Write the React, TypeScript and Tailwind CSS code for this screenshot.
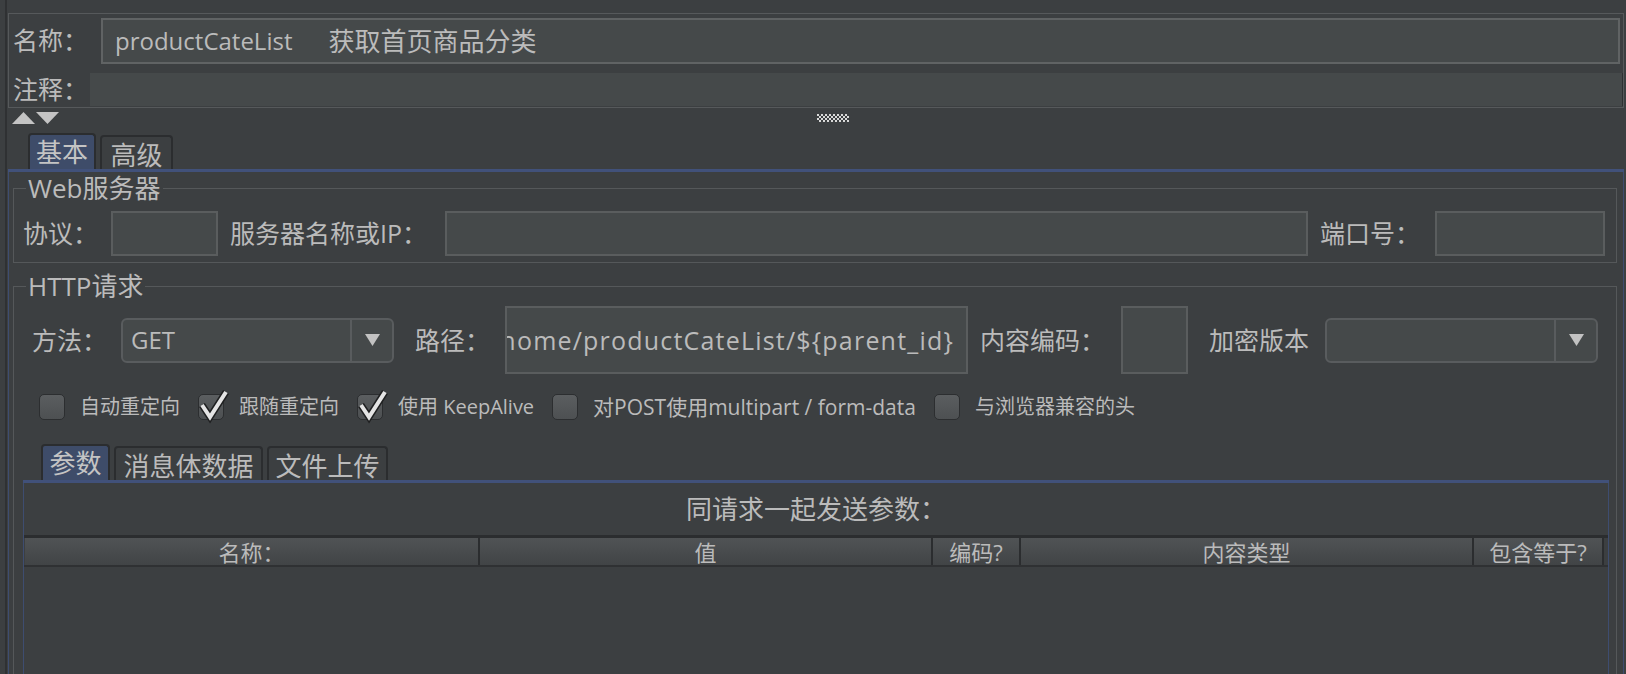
import React from "react";

const FONT = "font-['Open_Sans','Noto_Sans_CJK_SC',sans-serif]";

function Check() {
  return (
    <svg
      className="absolute left-0 top-0 overflow-visible"
      width="26"
      height="26"
      viewBox="0 0 26 26"
    >
      <path d="M3 10 L11 22 L27 -3" fill="none" stroke="#1f2021" strokeWidth="7" strokeLinejoin="miter" />
      <path d="M3 10 L11 22 L27 -3" fill="none" stroke="#e4e4e4" strokeWidth="4" strokeLinejoin="miter" />
    </svg>
  );
}

function CheckItem({ label, checked, size = "text-[20px]" }: { label: string; checked?: boolean; size?: string }) {
  return (
    <div className="flex items-center gap-[15px]">
      <span className="relative w-[26px] h-[26px] shrink-0 rounded-[5px] border border-[#2c2e30] bg-gradient-to-b from-[#5b5e60] to-[#4d5052]">
        {checked && <Check />}
      </span>
      <span className={`${size} leading-none whitespace-nowrap`}>{label}</span>
    </div>
  );
}

function Tab({ label, selected, w }: { label: string; selected?: boolean; w: string }) {
  return (
    <div
      className={
        selected
          ? `${w} h-[36px] flex items-center justify-center rounded-t-[4px] border-2 border-b-0 border-[#2b2d2f] bg-[#3e4c69] text-[26px] leading-none text-[#c4c4c4]`
          : `${w} h-[34px] flex items-center justify-center rounded-t-[4px] border-2 border-b-0 border-[#2b2d2f] bg-[#3c3f41] text-[26px] leading-none pt-[3px]`
      }
    >
      {label}
    </div>
  );
}

function Combo({ value }: { value?: string }) {
  return (
    <div className="w-[273px] h-[45px] flex rounded-[6px] border-2 border-[#595c5e] bg-[#45494a]">
      <div className="flex-1 flex items-center pl-[8px] text-[24px] leading-none">{value}</div>
      <div className="w-[42px] border-l-2 border-[#595c5e] flex items-center justify-center">
        <svg width="15" height="12" viewBox="0 0 15 12">
          <path d="M0 0 H15 L7.5 12 Z" fill="#c2c2c2" />
        </svg>
      </div>
    </div>
  );
}

function HeadCell({ label, w }: { label: string; w: string }) {
  return (
    <div
      className={`${w} h-full flex items-center justify-center border-r-2 border-[#2b2d2f] bg-gradient-to-b from-[#505355] to-[#414446] text-[22px] leading-none`}
    >
      {label}
    </div>
  );
}

export default function App() {
  return (
    <div className={`${FONT} w-[1626px] h-[674px] bg-[#3c3f41] text-[#bbbbbb] overflow-hidden flex`}>
      <div className="w-[5px] shrink-0" />
      <div className="w-[2px] shrink-0 bg-[#2f3133]" />
      <div className="w-[1px] shrink-0" />

      <div className="flex-1 min-w-0 flex flex-col pt-[13px] pr-[2px]">
        {/* 名称 / 注释 */}
        <div className="h-[95px] shrink-0 border border-[#56595b] flex flex-col">
          <div className="h-[53px] flex items-center">
            <span className="w-[92px] pl-[4px] text-[25px] leading-none">名称：</span>
            <div className="flex-1 h-[46px] mr-[3px] border-2 border-[#606364] bg-[#45494a] flex items-center pl-[12px] text-[24px] leading-none whitespace-nowrap">
              productCateList
              <span className="ml-[36px] text-[26px]">获取首页商品分类</span>
            </div>
          </div>
          <div className="h-[6px]" />
          <div className="h-[33px] flex items-center">
            <span className="w-[81px] pl-[4px] text-[25px] leading-none">注释：</span>
            <div className="flex-1 h-full bg-[#45494a] border-r border-[#2e3032]" />
          </div>
        </div>

        {/* splitter */}
        <div className="h-[26px] shrink-0 relative">
          <div className="flex pl-[4px] pt-[4px] gap-[1px]">
            <svg width="23" height="12" viewBox="0 0 23 12">
              <path d="M0 12 L11.5 0 L23 12 Z" fill="#c4c4c4" />
            </svg>
            <svg width="23" height="12" viewBox="0 0 23 12">
              <path d="M0 0 H23 L11.5 12 Z" fill="#c4c4c4" />
            </svg>
          </div>
          <svg className="absolute left-[809px] top-[6px]" width="34" height="8" viewBox="0 0 34 8">
            {[0, 4, 8, 12, 16, 20, 24, 28].map((x) => (
              <g key={x} fill="#d8d8d8">
                <rect x={x} y="0" width="2" height="2" />
                <rect x={x + 2} y="2" width="2" height="2" />
                <rect x={x} y="4" width="2" height="2" />
                <rect x={x + 2} y="6" width="2" height="2" />
              </g>
            ))}
          </svg>
        </div>

        {/* 基本 / 高级 */}
        <div className="h-[35px] shrink-0 flex items-end pl-[20px] gap-[4px]">
          <Tab label="基本" selected w="w-[68px]" />
          <Tab label="高级" w="w-[73px]" />
        </div>
        <div className="h-[3px] shrink-0 bg-[#41517a]" />

        <div className="flex-1 flex flex-col border-l border-r border-[#3e4d70] pl-[4px] pr-[6px]">
          {/* Web服务器 */}
          <fieldset className="mt-[2px] border border-[#55585a] pl-[9px] pr-[11px] pb-[6px]">
            <legend className="ml-[3px] px-[2px] text-[26px] leading-[28px]">Web服务器</legend>
            <div className="mt-[9px] h-[45px] flex items-center">
              <span className="w-[88px] text-[25px] leading-none">协议：</span>
              <div className="w-[107px] h-full border-2 border-[#5a5d5e] bg-[#45494a]" />
              <span className="ml-[12px] w-[215px] text-[25px] leading-none whitespace-nowrap">服务器名称或IP：</span>
              <div className="flex-1 h-full border-2 border-[#5a5d5e] bg-[#45494a]" />
              <span className="ml-[12px] w-[115px] text-[25px] leading-none">端口号：</span>
              <div className="w-[170px] h-full border-2 border-[#5a5d5e] bg-[#45494a]" />
            </div>
          </fieldset>

          {/* HTTP请求 */}
          <fieldset className="mt-[9px] border border-[#55585a] pl-[9px] pr-[7px]">
            <legend className="ml-[3px] px-[2px] text-[26px] leading-[28px]">HTTP请求</legend>
            <div className="mt-[6px] h-[68px] flex items-center pl-[9px]">
              <span className="w-[89px] text-[25px] leading-none">方法：</span>
              <Combo value="GET" />
              <span className="ml-[21px] w-[90px] text-[25px] leading-none">路径：</span>
              <div className="w-[463px] h-full border-2 border-[#5a5d5e] bg-[#45494a] flex items-center justify-end overflow-hidden pr-[12px]">
                <span className="text-[25px] tracking-[1.2px] leading-none whitespace-nowrap">/home/productCateList/${"{parent_id}"}</span>
              </div>
              <span className="ml-[12px] w-[141px] text-[25px] leading-none whitespace-nowrap">内容编码：</span>
              <div className="w-[67px] h-full border-2 border-[#5a5d5e] bg-[#45494a]" />
              <span className="ml-[21px] w-[116px] text-[25px] leading-none whitespace-nowrap">加密版本</span>
              <Combo />
            </div>

            <div className="mt-[16px] h-[34px] flex items-center pl-[16px] gap-[18px]">
              <CheckItem label="自动重定向" />
              <CheckItem label="跟随重定向" checked />
              <CheckItem label="使用 KeepAlive" checked />
              <CheckItem label="对POST使用multipart / form-data" size="text-[21px]" />
              <CheckItem label="与浏览器兼容的头" />
            </div>

            {/* 参数 panel */}
            <div className="mt-[21px] flex flex-col">
              <div className="h-[35px] flex items-end pl-[18px] gap-[4px]">
                <Tab label="参数" selected w="w-[69px]" />
                <Tab label="消息体数据" w="w-[149px]" />
                <Tab label="文件上传" w="w-[121px]" />
              </div>
              <div className="h-[3px] bg-[#41517a]" />
              <div className="h-[220px] flex flex-col border-l border-r border-[#3e4d70]">
                <div className="h-[52px] flex items-center justify-center text-[26px] leading-none">
                  同请求一起发送参数：
                </div>
                <div className="h-[3px] bg-[#2b2d2f]" />
                <div className="h-[29px] flex pl-[1px] border-b-2 border-[#2f3133]">
                  <HeadCell label="名称：" w="w-[455px]" />
                  <HeadCell label="值" w="w-[453px]" />
                  <HeadCell label="编码?" w="w-[88px]" />
                  <HeadCell label="内容类型" w="w-[453px]" />
                  <HeadCell label="包含等于?" w="w-[130px]" />
                </div>
              </div>
            </div>
          </fieldset>
        </div>
      </div>
    </div>
  );
}
